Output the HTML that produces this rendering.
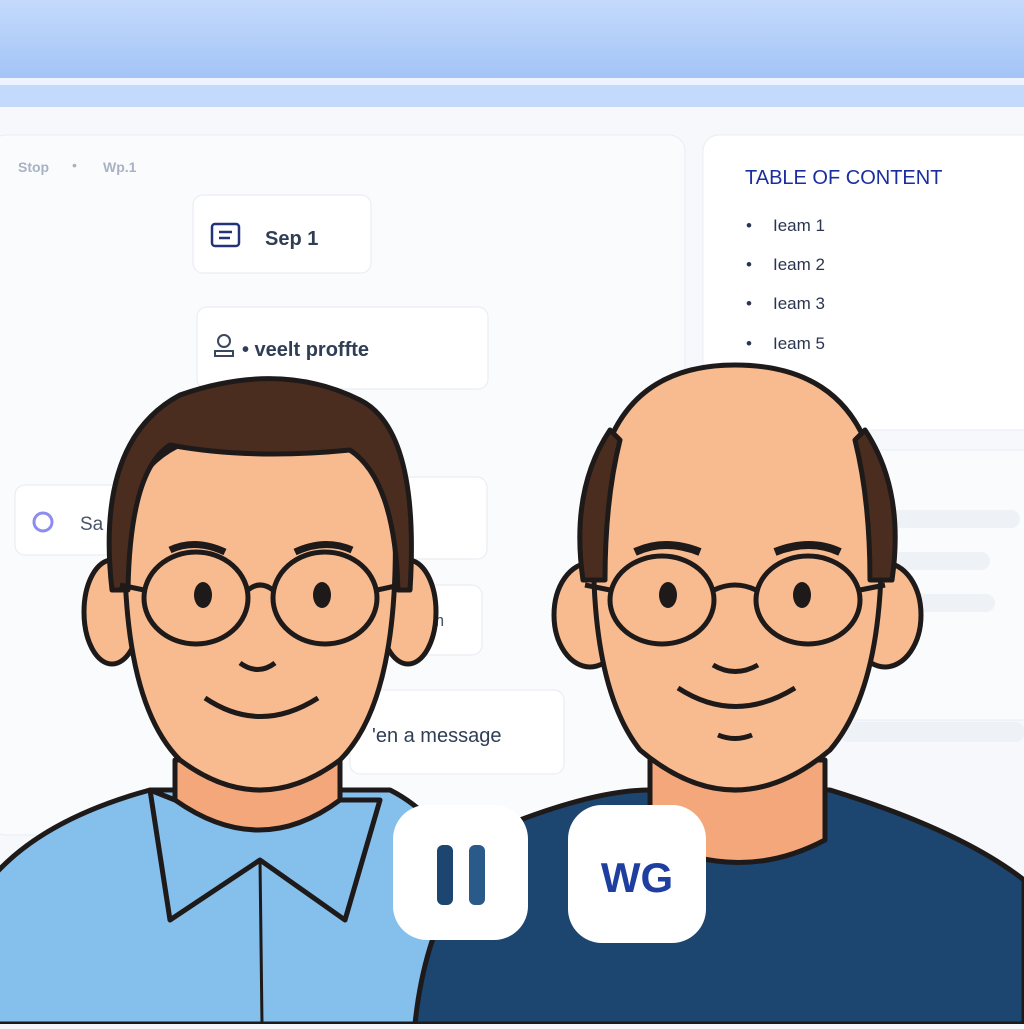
<!DOCTYPE html>
<html><head><meta charset="utf-8"><style>
body{margin:0;width:1024px;height:1024px;overflow:hidden;background:#f6f8fc;font-family:"Liberation Sans",sans-serif}
</style></head><body>
<svg width="1024" height="1024" viewBox="0 0 1024 1024" xmlns="http://www.w3.org/2000/svg">
<defs>
<linearGradient id="top" x1="0" y1="0" x2="0" y2="1"><stop offset="0" stop-color="#c4dafc"/><stop offset="1" stop-color="#a3c4f6"/></linearGradient>
</defs>
<rect width="1024" height="1024" fill="#f6f8fc"/>
<rect width="1024" height="78" fill="url(#top)"/>
<rect y="78" width="1024" height="7" fill="#eef4fd"/>
<rect y="85" width="1024" height="22" fill="#c4dafc"/>
<!-- panels -->
<rect x="-10" y="135" width="695" height="700" rx="16" fill="#fafbfd" stroke="#e8ecf3"/>
<rect x="703" y="135" width="340" height="295" rx="16" fill="#fff" stroke="#e8ecf3"/>
<rect x="703" y="450" width="340" height="270" rx="16" fill="#fafbfd" stroke="#e8ecf3"/>
<text x="18" y="172" font-size="14" font-weight="bold" fill="#a8b2c2">Stop</text>
<text x="72" y="170" font-size="14" fill="#a8b2c2">•</text>
<text x="103" y="172" font-size="14" font-weight="bold" fill="#a8b2c2">Wp.1</text>
<text x="745" y="184" font-size="20" fill="#1b2ea0">TABLE OF CONTENT</text>
<g font-size="17" fill="#2a3550">
<text x="746" y="231">•</text><text x="773" y="231">Ieam  1</text>
<text x="746" y="270">•</text><text x="773" y="270">Ieam  2</text>
<text x="746" y="309">•</text><text x="773" y="309">Ieam  3</text>
<text x="746" y="349">•</text><text x="773" y="349">Ieam  5</text>
</g>
<rect x="860" y="510" width="160" height="18" rx="9" fill="#eef1f6"/>
<rect x="860" y="552" width="130" height="18" rx="9" fill="#eef1f6"/>
<rect x="860" y="594" width="135" height="18" rx="9" fill="#eef1f6"/>
<rect x="840" y="722" width="184" height="20" rx="8" fill="#eef1f6"/>
<!-- cards -->
<g fill="#fff" stroke="#e6eaf1">
<rect x="193" y="195" width="178" height="78" rx="10"/>
<rect x="197" y="307" width="291" height="82" rx="10"/>
<rect x="15" y="485" width="140" height="70" rx="10"/>
<rect x="380" y="477" width="107" height="82" rx="10"/>
<rect x="380" y="585" width="102" height="70" rx="10"/>
<rect x="350" y="690" width="214" height="84" rx="10"/>
</g>
<rect x="212" y="224" width="27" height="22" rx="3" fill="none" stroke="#23337a" stroke-width="2.5"/>
<line x1="219" y1="232" x2="232" y2="232" stroke="#23337a" stroke-width="2.5"/><line x1="219" y1="238" x2="230" y2="238" stroke="#23337a" stroke-width="2.5"/>
<text x="265" y="245" font-size="20" font-weight="bold" fill="#2f3e55">Sep 1</text>
<circle cx="224" cy="341" r="6" fill="none" stroke="#3b4660" stroke-width="2"/><path d="M215 356 v-5 h18 v5 z" fill="none" stroke="#3b4660" stroke-width="2"/>
<text x="242" y="356" font-size="20" font-weight="bold" fill="#2f3e55">• veelt proffte</text>
<circle cx="43" cy="522" r="9" fill="none" stroke="#8d8cf0" stroke-width="3"/>
<text x="80" y="530" font-size="19" fill="#4a5468">Sa</text>
<text x="430" y="626" font-size="17" fill="#4a5468">m</text>
<text x="372" y="742" font-size="20" fill="#2f3e55">'en a message</text>
<!-- left man -->
<g stroke="#1e1a1a" stroke-width="5" stroke-linejoin="round">
<path d="M-10 1024 L-10 880 Q40 820 150 790 L390 790 Q440 815 470 880 L480 1024 Z" fill="#85bfec"/>
<path d="M175 760 L175 830 Q260 880 340 830 L340 760 Z" fill="#f4a77b"/>
<path d="M150 790 L170 920 L260 860 L345 920 L380 800 L340 800 Q260 860 175 800 Z" fill="#85bfec"/>
<line x1="260" y1="860" x2="262" y2="1024" stroke-width="3"/>
<ellipse cx="112" cy="612" rx="28" ry="52" fill="#f8bb90"/>
<ellipse cx="408" cy="612" rx="28" ry="52" fill="#f8bb90"/>
<path d="M125 520 Q120 700 180 760 Q260 820 340 760 Q400 700 395 520 Q380 430 260 430 Q140 430 125 520Z" fill="#f8bb90"/>
<path d="M112 590 Q95 440 180 395 Q280 360 360 400 Q420 430 410 590 L398 590 Q395 480 350 450 Q250 460 170 445 Q130 470 128 590 Z" fill="#4b2d20"/>
</g>
<g stroke="#1e1a1a" stroke-width="5" fill="none">
<ellipse cx="196" cy="598" rx="52" ry="46"/><ellipse cx="325" cy="598" rx="52" ry="46"/>
<path d="M248 590 Q260 580 273 590 M144 590 L120 585 M377 590 L400 585"/>
<path d="M170 550 Q195 538 225 552 M295 552 Q325 538 352 550" stroke-width="7"/>
<path d="M240 663 Q258 676 275 663 M205 698 Q260 735 318 698"/>
</g>
<ellipse cx="203" cy="595" rx="9" ry="13" fill="#1e1a1a"/><ellipse cx="322" cy="595" rx="9" ry="13" fill="#1e1a1a"/>
<!-- right man -->
<g stroke="#1e1a1a" stroke-width="5" stroke-linejoin="round">
<path d="M415 1024 Q430 880 520 820 Q600 790 650 790 L830 790 Q960 830 1024 880 L1024 1024 Z" fill="#1c4570"/>
<path d="M650 760 L650 840 Q740 885 825 840 L825 760 Z" fill="#f4a77b"/>
<ellipse cx="590" cy="615" rx="36" ry="52" fill="#f8bb90"/>
<ellipse cx="885" cy="615" rx="36" ry="52" fill="#f8bb90"/>
<path d="M595 500 Q585 680 640 750 Q735 830 830 750 Q890 680 880 500 Q865 365 735 365 Q610 365 595 500Z" fill="#f8bb90"/>
<path d="M583 580 Q570 490 610 430 L620 440 Q605 500 605 580 Z" fill="#4b2d20"/>
<path d="M892 580 Q905 490 865 430 L855 440 Q870 500 870 580 Z" fill="#4b2d20"/>
</g>
<g stroke="#1e1a1a" stroke-width="5" fill="none">
<ellipse cx="662" cy="600" rx="52" ry="44"/><ellipse cx="808" cy="600" rx="52" ry="44"/>
<path d="M714 590 Q735 580 756 590 M610 590 L585 585 M860 590 L885 585"/>
<path d="M635 552 Q665 538 700 552 M775 552 Q810 538 840 552" stroke-width="8"/>
<path d="M713 665 Q735 678 758 665 M678 688 Q735 725 795 688 M718 735 Q735 742 752 735"/>
</g>
<ellipse cx="668" cy="595" rx="9" ry="13" fill="#1e1a1a"/><ellipse cx="802" cy="595" rx="9" ry="13" fill="#1e1a1a"/>
<!-- buttons -->
<rect x="393" y="805" width="135" height="135" rx="34" fill="#fff"/>
<rect x="437" y="845" width="16" height="60" rx="6" fill="#1c4570"/>
<rect x="469" y="845" width="16" height="60" rx="6" fill="#2a5a8a"/>
<rect x="568" y="805" width="138" height="138" rx="34" fill="#fff"/>
<text x="637" y="892" font-size="42" font-weight="bold" fill="#1e3fa0" text-anchor="middle">WG</text>
</svg>
</body></html>
